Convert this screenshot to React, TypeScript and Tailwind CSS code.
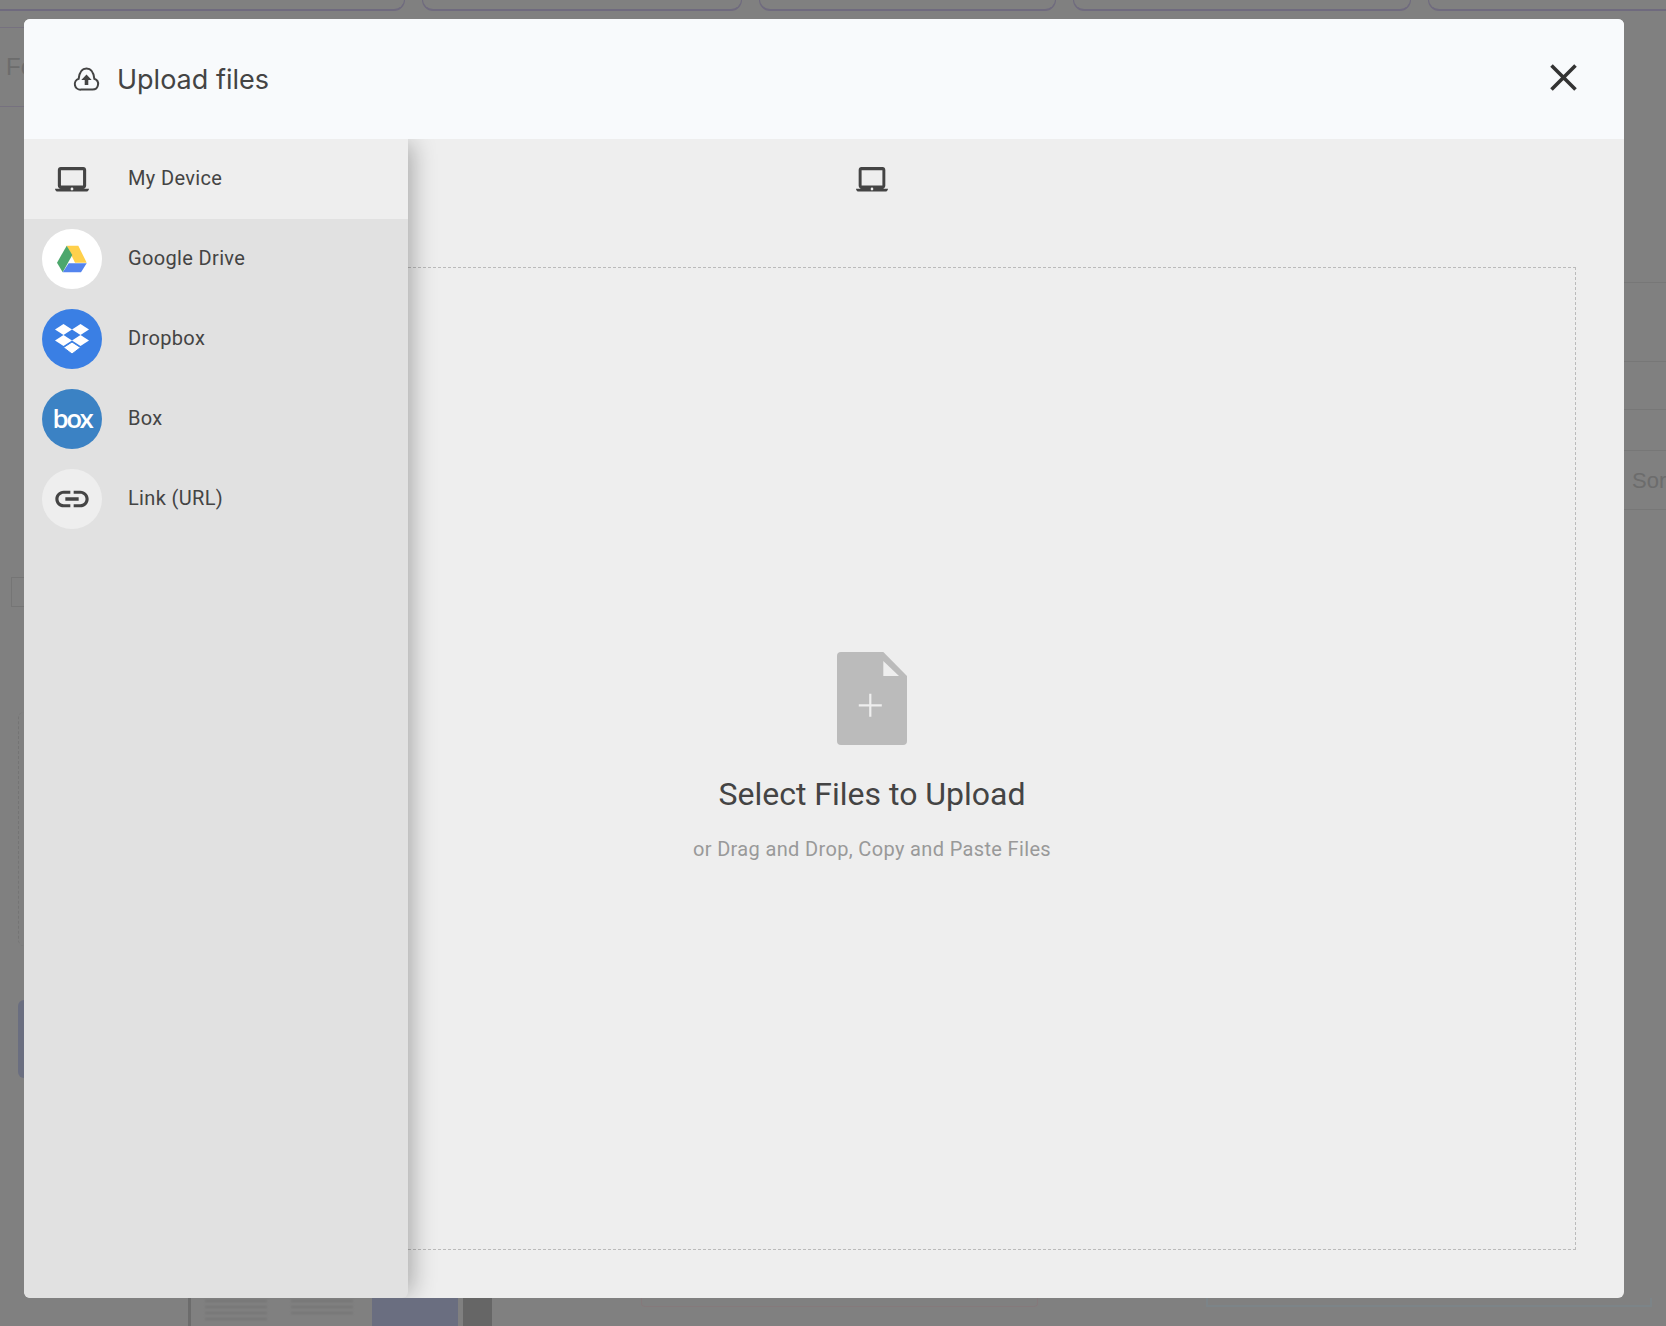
const LAPTOP =
  "M20 18c1.1 0 1.99-.9 1.99-2L22 5c0-1.1-.9-2-2-2H4c-1.1 0-2 .9-2 2v11c0 1.1.9 2 2 2H0c0 1.1.9 2 2 2h20c1.1 0 2-.9 2-2h-4zM4.200 5.300h15.600v10.500H4.200V5.300zm7.800 13.900c-.55 0-1-.45-1-1s.45-1 1-1 1 .45 1 1-.45 1-1 1z";

const LaptopIcon = ({ width = 34 }: { width?: number }) => (
  <svg width={width} height="26" viewBox="0 3 24 18" preserveAspectRatio="none" fill="#444444">
    <path d={LAPTOP} fillRule="evenodd" />
  </svg>
);

const DriveIcon = () => (
  <svg width="60" height="60" viewBox="0 0 60 60">
    <path d="M24.7 16.7h11.6l8.4 17H33z" fill="#ffd04b" />
    <path d="M24.7 16.7 15 33.7l5.7 9.6 9.6-17.3z" fill="#4ca76c" />
    <path d="M44.7 34.3 39 43.3H20.7l6-9z" fill="#5384ee" />
  </svg>
);

const DropboxIcon = () => (
  <svg width="60" height="60" viewBox="0 0 60 60" fill="#ffffff">
    <path d="M21.5 15 30 20.5 21.5 26 13 20.5z" />
    <path d="M38.5 15 47 20.5 38.5 26 30 20.5z" />
    <path d="M21.5 26 30 31.5 21.5 37 13 31.5z" />
    <path d="M38.5 26 47 31.5 38.5 37 30 31.5z" />
    <path d="M30 33 38.500 38.500 30 45 21.500 38.500z" stroke="#3a7fe4" strokeWidth="1" />
  </svg>
);

const LinkIcon = () => (
  <svg width="40" height="40" viewBox="0 0 24 24" fill="#444444">
    <path d="M3.9 12c0-1.71 1.39-3.1 3.1-3.1h4V7H7c-2.76 0-5 2.24-5 5s2.24 5 5 5h4v-1.9H7c-1.71 0-3.1-1.39-3.1-3.1zM8 13h8v-2H8v2zm9-6h-4v1.9h4c1.71 0 3.1 1.39 3.1 3.1s-1.39 3.1-3.1 3.1h-4V17h4c2.76 0 5-2.24 5-5s-2.24-5-5-5z" />
  </svg>
);

const sources = [
  { name: "Google Drive", circle: "bg-white", icon: <DriveIcon /> },
  { name: "Dropbox", circle: "bg-[#3a7fe4]", icon: <DropboxIcon /> },
  {
    name: "Box",
    circle: "bg-[#3b82c4]",
    icon: <span className="-mt-[2px] font-['Open_Sans'] text-[26px] font-semibold leading-none tracking-[-2.5px] text-white">box</span>,
  },
  { name: "Link (URL)", circle: "bg-[#eeeeee]", icon: <LinkIcon /> },
];

function Backdrop() {
  return (
    <div className="flex h-[1326px] flex-col bg-[#808080] font-['Liberation_Sans',sans-serif] text-[#6c6c6c]">
      <div className="flex h-[11px] shrink-0 gap-[17px]">
        <div className="w-[405px] rounded-br-[12px] border-r border-b-2 border-[#6f6a7e]" />
        <div className="w-[320px] rounded-b-[12px] border-x border-b-2 border-[#6f6a7e]" />
        <div className="w-[297px] rounded-b-[12px] border-x border-b-2 border-[#6f6a7e]" />
        <div className="w-[338px] rounded-b-[12px] border-x border-b-2 border-[#6f6a7e]" />
        <div className="flex-1 rounded-bl-[12px] border-l border-b-2 border-[#6f6a7e]" />
      </div>
      <div className="flex flex-1 justify-between">
        <div className="flex w-6 flex-col">
          <div className="mt-[16px] flex h-[80px] items-center whitespace-nowrap border-y border-[#76717f] pl-[6px] text-[24px]">
            Fo
          </div>
          <div className="ml-[11px] mt-[470px] h-[30px] border border-r-0 border-[#757575]" />
          <div className="ml-[18px] mt-[105px] h-[234px] rounded-l-[8px] border-l border-dashed border-[#747474]" />
          <div className="ml-[18px] mt-[54px] h-[78px] rounded-l-[8px] bg-[#6a6e80]" />
        </div>
        <div className="flex w-[42px] flex-col">
          <div className="mt-[271px] h-[80px] border-y border-[#777777]" />
          <div className="h-[48px] border-b border-[#777777]" />
          <div className="h-[41px] border-b border-[#777777]" />
          <div className="flex h-[59px] items-center whitespace-nowrap border-b border-[#777777] pl-[8px] text-[22px]">
            Sor
          </div>
        </div>
      </div>
      <div className="flex h-[28px] shrink-0">
        <div className="ml-[188px] w-[3px] bg-[#6c6c6c]" />
        <div className="flex w-[181px] gap-[24px] pl-[14px] pt-[2px] blur-[1px]">
          <div className="flex w-[62px] flex-col gap-[4px]">
            <div className="h-[2px] bg-[#747474]" />
            <div className="h-[2px] bg-[#747474]" />
            <div className="h-[2px] bg-[#747474]" />
            <div className="h-[2px] bg-[#747474]" />
          </div>
          <div className="flex w-[62px] flex-col gap-[4px]">
            <div className="h-[2px] bg-[#747474]" />
            <div className="h-[2px] bg-[#747474]" />
            <div className="h-[2px] bg-[#747474]" />
          </div>
        </div>
        <div className="w-[86px] bg-[#6a6e80]" />
        <div className="ml-[5px] w-[29px] bg-[#666666]" />
        <div className="ml-[149px] h-[9px] w-[397px] rounded-b-[4px] border-x border-b border-[#85797b]" />
        <div className="ml-[168px] h-[9px] w-[446px] border-x-2 border-b-2 border-[#7c8488]" />
      </div>
    </div>
  );
}

export default function App() {
  return (
    <div className="relative h-[1326px] overflow-hidden font-['Roboto',sans-serif]">
      <Backdrop />

      {/* upload dialog */}
      <div className="absolute left-[24px] top-[19px] flex h-[1279px] w-[1600px] flex-col overflow-hidden rounded-[6px] bg-[#eeeeee]">
        <div className="relative z-10 flex h-[120px] shrink-0 items-center bg-[#f8fafc] pl-[49px] pr-[47px]">
          <svg width="27" height="24" viewBox="0 0 27 24" fill="none">
            <path
              d="M8 22.6h11.500a5.600 5.600 0 0 0 1.800-10.900C20.600 5 17.600 1.400 13.500 1.400S6.400 5 5.700 11.700A5.600 5.600 0 0 0 8 22.600z"
              stroke="#444444"
              strokeWidth="2"
            />
            <path d="M13.500 7.600l5.200 5.400h-3.400v5h-3.600v-5H8.300z" fill="#444444" />
          </svg>
          <span className="ml-[17px] pt-[2px] font-['Inter',sans-serif] text-[27px] text-[#444444]">Upload files</span>
          <svg className="-mt-[3px] ml-auto" width="27" height="27" viewBox="0 0 27 27" stroke="#333333" strokeWidth="3.6">
            <path d="M1.500 1.500l24 24M25.500 1.500l-24 24" />
          </svg>
        </div>

        <div className="relative flex min-h-0 flex-1 flex-col pb-[48px] pl-[144px] pr-[48px]">
          <div className="flex h-[128px] shrink-0 justify-center pt-[28px]">
            <LaptopIcon width={32} />
          </div>
          <div className="flex flex-1 flex-col items-center justify-center border border-dashed border-[#bbbbbb] pb-[3px]">
            <svg width="70" height="93" viewBox="0 0 70 93">
              <path
                d="M4 0h42.300L70 24v65a4 4 0 0 1-4 4H4a4 4 0 0 1-4-4V4a4 4 0 0 1 4-4z"
                fill="#bbbbbb"
              />
              <path d="M46.300 9v15H62z" fill="#eeeeee" />
              <path d="M21.800 53.300h23M33.300 41.800v23" stroke="#eeeeee" strokeWidth="2.200" />
            </svg>
            <h2 className="mt-[29px] text-[32px] leading-[40px] text-[#444444]">Select Files to Upload</h2>
            <p className="mt-[21px] text-[20px] leading-[28px] tracking-[0.35px] text-[#999999]">
              or Drag and Drop, Copy and Paste Files
            </p>
          </div>

          {/* source list sits on top of the drop zone */}
          <div className="absolute bottom-0 left-0 top-0 w-[384px] rounded-b-[6px] bg-[#e1e1e1] text-[20px] tracking-[0.35px] text-[#444444] shadow-[8px_0_24px_-4px_rgba(0,0,0,0.3)]">
            <div className="flex h-[80px] items-center bg-[#eeeeee] pl-[18px]">
              <div className="mt-[1px] flex w-[60px] justify-center">
                <LaptopIcon />
              </div>
              <span className="-mt-[2px] ml-[26px]">My Device</span>
            </div>
            {sources.map((s) => (
              <div key={s.name} className="flex h-[80px] items-center pl-[18px]">
                <div className={`flex h-[60px] w-[60px] items-center justify-center rounded-full ${s.circle}`}>{s.icon}</div>
                <span className="-mt-[2px] ml-[26px]">{s.name}</span>
              </div>
            ))}
          </div>
        </div>
      </div>
    </div>
  );
}
